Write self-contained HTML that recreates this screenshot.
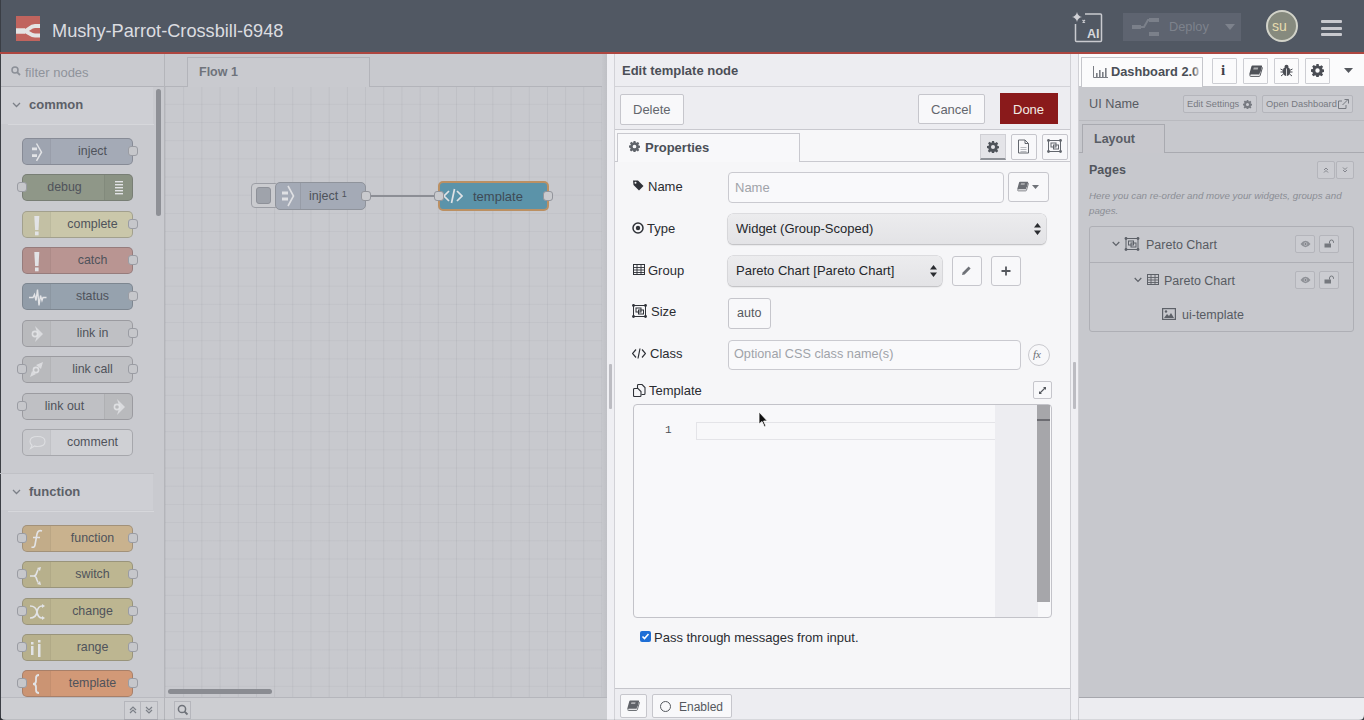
<!DOCTYPE html>
<html><head><meta charset="utf-8">
<style>
*{box-sizing:border-box;margin:0;padding:0}
html,body{width:1364px;height:720px;overflow:hidden;background:#cfd0d4;font-family:"Liberation Sans",sans-serif;position:relative}
.a{position:absolute}
#hdr{left:0;top:0;width:1364px;height:52px;background:#515863}
#redline{left:0;top:52px;width:1364px;height:2px;background:#ad4640}
#pal{left:0;top:54px;width:164px;height:666px;background:#c9cacf}
#palbr{left:164px;top:54px;width:1px;height:666px;background:#b4b5ba}
#ws{left:165px;top:54px;width:442px;height:666px;background:#d0d1d5}
#tray{left:607px;top:54px;width:471px;height:666px;background:#f6f6f8}
#sb{left:1078px;top:54px;width:286px;height:666px;background:#c9c9ce}
.txt{white-space:pre;line-height:1}
</style></head><body>

<div id="hdr" class="a"><div class="a" style="left:0;top:0;width:1px;height:52px;background:#3a3e45"></div>
 <div class="a" style="left:16px;top:16px;width:24px;height:25px;background:#c0645e"></div>
 <svg class="a" style="left:16px;top:16px" width="24" height="25" viewBox="0 0 24 25"><path d="M0 15 L8 15 C12 15 14 10 19 10 L24 10 M8 15 C12 15 14 19.5 19 19.5 L24 19.5" stroke="#e4e4e4" stroke-width="4" fill="none"/><path d="M0 15 L9 15" stroke="#e4e4e4" stroke-width="5.5"/></svg>
 <div class="a txt" style="left:52px;top:22px;font-size:18.2px;color:#dcdde0">Mushy-Parrot-Crossbill-6948</div>
 <svg class="a" style="left:1071px;top:10px" width="34" height="34" viewBox="0 0 34 34">
  <path d="M4.5 14 V30.5 Q4.5 31.5 5.5 31.5 H29.5 Q30.5 31.5 30.5 30.5 V5 Q30.5 4 29.5 4 H14" stroke="#c9cacf" stroke-width="1.5" fill="none"/>
  <path d="M6 2 Q6.8 6.2 11 7 Q6.8 7.8 6 12 Q5.2 7.8 1 7 Q5.2 6.2 6 2Z" fill="#d0d1d6"/>
  <path d="M11.5 10 L14 12.5 M14 10 L11.5 12.5" stroke="#c9cacf" stroke-width="1.1"/>
  <text x="16" y="27.5" font-family="Liberation Sans" font-weight="700" font-size="12.5" fill="#d6d7db">AI</text>
 </svg>
 <div class="a" style="left:1123px;top:13px;width:118px;height:28px;background:#5e6470"></div>
 <svg class="a" style="left:1132px;top:17px" width="28" height="20" viewBox="0 0 28 20"><rect x="0" y="8" width="9" height="4" fill="#7b808a"/><rect x="17" y="1" width="10" height="4" fill="#7b808a"/><rect x="17" y="15" width="10" height="4" fill="#7b808a"/><path d="M9 10 L12 10 L16 3 L17 3" stroke="#7b808a" stroke-width="2" fill="none"/></svg>
 <div class="a txt" style="left:1169px;top:20.5px;font-size:12.8px;color:#7d828c">Deploy</div>
 <svg class="a" style="left:1225px;top:24px" width="10" height="6"><path d="M0 0 L10 0 L5 6Z" fill="#7d828c"/></svg>
 <div class="a" style="left:1266px;top:10px;width:32px;height:32px;border-radius:50%;background:#868a7e;border:2px solid #d2d3c9"></div>
 <div class="a txt" style="left:1272px;top:19px;font-size:14px;color:#e6dcae">su</div>
 <div class="a" style="left:1321px;top:20px;width:21px;height:3px;background:#c8c9ce;border-radius:1px"></div>
 <div class="a" style="left:1321px;top:27px;width:21px;height:3px;background:#c8c9ce;border-radius:1px"></div>
 <div class="a" style="left:1321px;top:33px;width:21px;height:3px;background:#c8c9ce;border-radius:1px"></div>
</div>
<div id="redline" class="a"></div>
<style>
.pn{left:22px;width:111px;height:27px;border:1px solid rgba(60,62,70,0.28);border-radius:5px;overflow:hidden}
.pni{left:0;top:0;width:28px;height:25px;background:rgba(0,0,0,0.03);border-right:1px solid rgba(0,0,0,0.03)}
.pni.r{left:auto;right:0;border-right:none;border-left:1px solid rgba(0,0,0,0.05)}
.pni svg{position:absolute;left:0;top:0}
.pnl{top:0;height:25px;line-height:25px;text-align:center;font-size:12.4px;color:#4f535b;white-space:pre}
.pp{width:10px;height:10px;background:#c6c7cb;border:1px solid #9a9ca3;border-radius:3px}
.cat{left:0;width:164px;height:38px}
</style><div id="pal" class="a"></div><div id="palbr" class="a"></div>
<div class="a" style="left:0;top:54px;width:1px;height:666px;background:#3c3f45"></div><svg class="a" style="left:11px;top:66px" width="10" height="10" viewBox="0 0 10 10"><circle cx="4" cy="4" r="3" fill="none" stroke="#8b8f97" stroke-width="1.5"/><path d="M6.3 6.3 L9 9" stroke="#8b8f97" stroke-width="1.8"/></svg><div class="a txt" style="left:25px;top:66px;font-size:13px;color:#8f939b">filter nodes</div><div class="a" style="left:1px;top:86px;width:163px;height:1px;background:#b2b3b9"></div><div class="a" style="left:1px;top:87px;width:152px;height:37px;background:#cecfd4"></div><svg class="a" style="left:12px;top:102px" width="9" height="6" viewBox="0 0 9 6"><path d="M1 1 L4.5 4.5 L8 1" fill="none" stroke="#7c8088" stroke-width="1.3"/></svg><div class="a txt" style="left:29px;top:98px;font-size:13px;font-weight:700;color:#5c6068">common</div><div class="a" style="left:8px;top:124px;width:146px;height:1px;background:#d6d7db"></div><div class="a pn" style="top:138px;background:#a4aab6"><div class="a pni"><svg width="28" height="26" viewBox="0 0 28 26"><path d="M9 9.8 h5 M9 16.6 h5" stroke="#e2e3e6" stroke-width="2.8"/><path d="M13.5 4.5 l5 8.7 l-5 8.7" fill="none" stroke="#e2e3e6" stroke-width="1.5"/></svg></div><div class="a pnl" style="left:28px;width:83px">inject</div></div><div class="a pp" style="left:128px;top:146px"></div><div class="a pn" style="top:174px;background:#8f9788"><div class="a pni r"><svg width="28" height="26" viewBox="0 0 28 26"><g fill="#e2e3e6"><rect x="10" y="6" width="8" height="1.4"/><rect x="10" y="9" width="8" height="1.4"/><rect x="10" y="12" width="8" height="1.4"/><rect x="10" y="15" width="8" height="1.4"/><rect x="10" y="18" width="8" height="1.4"/></g></svg></div><div class="a pnl" style="left:0;width:83px">debug</div></div><div class="a pp" style="left:17px;top:182px"></div><div class="a pn" style="top:211px;background:#cac7aa"><div class="a pni"><svg width="28" height="26" viewBox="0 0 28 26"><path d="M11.3 4 h5 l-0.8 14 h-3.4z" fill="#e2e3e6"/><rect x="12" y="19.5" width="3.6" height="3.8" fill="#e2e3e6"/></svg></div><div class="a pnl" style="left:28px;width:83px">complete</div></div><div class="a pp" style="left:128px;top:219px"></div><div class="a pn" style="top:247px;background:#b99592"><div class="a pni"><svg width="28" height="26" viewBox="0 0 28 26"><path d="M11.3 4 h5 l-0.8 14 h-3.4z" fill="#e2e3e6"/><rect x="12" y="19.5" width="3.6" height="3.8" fill="#e2e3e6"/></svg></div><div class="a pnl" style="left:28px;width:83px">catch</div></div><div class="a pp" style="left:128px;top:255px"></div><div class="a pn" style="top:283px;background:#96a2ae"><div class="a pni"><svg width="28" height="26" viewBox="0 0 28 26"><path d="M6 13.5 h4 l1.5 -3 l1.5 6 l1.5 -11 l1.5 16 l1.5 -10 l1.5 5 l1 -3 h3.5" fill="none" stroke="#e2e3e6" stroke-width="1.4"/></svg></div><div class="a pnl" style="left:28px;width:83px">status</div></div><div class="a pp" style="left:128px;top:291px"></div><div class="a pn" style="top:320px;background:#bfc0c4"><div class="a pni"><svg width="28" height="26" viewBox="0 0 28 26"><path d="M12 5 l8 8 l-8 8 l2.5 -8z" fill="#e2e3e6" opacity="0.8"/><circle cx="12" cy="13" r="2.6" fill="none" stroke="#e2e3e6" stroke-width="1.6" opacity="0.9"/></svg></div><div class="a pnl" style="left:28px;width:83px">link in</div></div><div class="a pp" style="left:128px;top:328px"></div><div class="a pn" style="top:356px;background:#bfc0c4"><div class="a pni"><svg width="28" height="26" viewBox="0 0 28 26"><path d="M13 8 l7 -3 l-2 7z M7 20 l6 -3 l-4 -3z" fill="#e2e3e6" opacity="0.8"/><circle cx="13" cy="13" r="2.6" fill="none" stroke="#e2e3e6" stroke-width="1.6" opacity="0.9"/></svg></div><div class="a pnl" style="left:28px;width:83px">link call</div></div><div class="a pp" style="left:128px;top:364px"></div><div class="a pp" style="left:17px;top:364px"></div><div class="a pn" style="top:393px;background:#bfc0c4"><div class="a pni r"><svg width="28" height="26" viewBox="0 0 28 26"><path d="M12 5 l8 8 l-8 8 l2.5 -8z" fill="#e2e3e6" opacity="0.8"/><circle cx="12" cy="13" r="2.6" fill="none" stroke="#e2e3e6" stroke-width="1.6" opacity="0.9"/></svg></div><div class="a pnl" style="left:0;width:83px">link out</div></div><div class="a pp" style="left:17px;top:401px"></div><div class="a pn" style="top:429px;background:#cfd0d4"><div class="a pni"><svg width="28" height="26" viewBox="0 0 28 26"><path d="M7 11.5 q0 -5 7.5 -5 q7.5 0 7.5 5 q0 5 -7.5 5 q-2 0 -3 -0.5 l-4 2.5 l1.5 -3.2 q-2 -1.5 -2 -3.8z" fill="none" stroke="#e2e3e6" stroke-width="1.1" opacity="0.8"/></svg></div><div class="a pnl" style="left:28px;width:83px">comment</div></div><div class="a" style="left:0;top:473px;width:154px;height:1px;background:#c0c1c6"></div><div class="a" style="left:1px;top:474px;width:152px;height:36px;background:#cecfd4"></div><svg class="a" style="left:12px;top:489px" width="9" height="6" viewBox="0 0 9 6"><path d="M1 1 L4.5 4.5 L8 1" fill="none" stroke="#7c8088" stroke-width="1.3"/></svg><div class="a txt" style="left:29px;top:485px;font-size:13px;font-weight:700;color:#5c6068">function</div><div class="a" style="left:8px;top:511px;width:146px;height:1px;background:#d6d7db"></div><div class="a pn" style="top:525px;background:#c9b28e"><div class="a pni"><svg width="28" height="26" viewBox="0 0 28 26"><path d="M19 5 q-4 -1.5 -5 3 l-2 11 q-0.5 3 -3.5 2" fill="none" stroke="#e2e3e6" stroke-width="1.6"/><path d="M10 11.5 h7" stroke="#e2e3e6" stroke-width="1.4"/></svg></div><div class="a pnl" style="left:28px;width:83px">function</div></div><div class="a pp" style="left:128px;top:533px"></div><div class="a pp" style="left:17px;top:533px"></div><div class="a pn" style="top:561px;background:#bdb691"><div class="a pni"><svg width="28" height="26" viewBox="0 0 28 26"><path d="M7 14 h4 q2 0 3 -4 l1 -2.5 M11 14 q2 0 3 4 l1 2.5" fill="none" stroke="#e2e3e6" stroke-width="1.6"/><path d="M14 6 l4 -1 l-1 4z M14 22 l4 1 l-1 -4z" fill="#e2e3e6"/></svg></div><div class="a pnl" style="left:28px;width:83px">switch</div></div><div class="a pp" style="left:128px;top:569px"></div><div class="a pp" style="left:17px;top:569px"></div><div class="a pn" style="top:598px;background:#bdb691"><div class="a pni"><svg width="28" height="26" viewBox="0 0 28 26"><path d="M7 7 q6 0 7 6 q1 6 5 6 M7 19 q6 0 7 -6 q1 -6 5 -6" fill="none" stroke="#e2e3e6" stroke-width="1.6"/><path d="M19 5 l3 2 l-3 2z M19 17 l3 2 l-3 2z" fill="#e2e3e6"/></svg></div><div class="a pnl" style="left:28px;width:83px">change</div></div><div class="a pp" style="left:128px;top:606px"></div><div class="a pp" style="left:17px;top:606px"></div><div class="a pn" style="top:634px;background:#bdb691"><div class="a pni"><svg width="28" height="26" viewBox="0 0 28 26"><rect x="8" y="7" width="2.5" height="2.5" fill="#e2e3e6"/><rect x="8" y="11" width="2.5" height="9" fill="#e2e3e6"/><rect x="15" y="5" width="2.5" height="2.5" fill="#e2e3e6"/><rect x="15" y="9" width="2.5" height="13" fill="#e2e3e6"/></svg></div><div class="a pnl" style="left:28px;width:83px">range</div></div><div class="a pp" style="left:128px;top:642px"></div><div class="a pp" style="left:17px;top:642px"></div><div class="a pn" style="top:670px;background:#d29977"><div class="a pni"><svg width="28" height="26" viewBox="0 0 28 26"><path d="M16 4 q-3 0 -3 3 v3 q0 3 -3 3 q3 0 3 3 v3 q0 3 3 3" fill="none" stroke="#e2e3e6" stroke-width="1.8"/></svg></div><div class="a pnl" style="left:28px;width:83px">template</div></div><div class="a pp" style="left:128px;top:678px"></div><div class="a pp" style="left:17px;top:678px"></div><div class="a" style="left:156px;top:89px;width:5px;height:127px;background:#8e9096;border-radius:3px"></div><div class="a" style="left:1px;top:697px;width:163px;height:23px;background:#cdced2;border-top:1px solid #b9bac0"></div><div class="a" style="left:124px;top:701px;width:17px;height:19px;border:1px solid #b5b6bc;background:#cfd0d4"></div><div class="a" style="left:140px;top:701px;width:18px;height:19px;border:1px solid #b5b6bc;background:#cfd0d4"></div><svg class="a" style="left:128px;top:705px" width="10" height="10" viewBox="0 0 10 10"><path d="M2 5 L5 2 L8 5 M2 8 L5 5 L8 8" fill="none" stroke="#7c8088" stroke-width="1.2"/></svg><svg class="a" style="left:144px;top:705px" width="10" height="10" viewBox="0 0 10 10"><path d="M2 2 L5 5 L8 2 M2 5 L5 8 L8 5" fill="none" stroke="#7c8088" stroke-width="1.2"/></svg>
<style>
#ws{left:165px;top:54px;width:442px;height:666px;background:#c8c9ce}
#grid{left:165px;top:86px;width:438px;height:611px;
 background-image:linear-gradient(to right, rgba(110,112,122,0.10) 1px, transparent 1px),linear-gradient(to bottom, rgba(110,112,122,0.075) 1px, transparent 1px);
 background-size:18.2px 18.2px;background-position:0 -0.4px}
</style>
<div id="ws" class="a"></div>
<div id="grid" class="a"></div>
<div class="a" style="left:165px;top:86px;width:442px;height:1px;background:#b3b4ba"></div><div class="a" style="left:187px;top:57px;width:183px;height:30px;background:#c9cacf;border:1px solid #b3b4ba;border-bottom:none"></div><div class="a txt" style="left:199px;top:66px;font-size:12.5px;font-weight:700;color:#6f737b">Flow 1</div><div class="a" style="left:602px;top:54px;width:5px;height:643px;background:linear-gradient(to right,#c6c7cc,#bfc0c5)"></div><div class="a" style="left:251px;top:183px;width:28px;height:25px;background:#cacbcf;border:1px solid #9c9ea5;border-radius:4px"></div><div class="a" style="left:256px;top:187px;width:15px;height:17px;background:#9fa3ab;border:1px solid #8e9199;border-radius:3px"></div><div class="a" style="left:275px;top:182px;width:91px;height:28px;background:#a4aab6;border:1px solid #8f939b;border-radius:5px"></div><div class="a" style="left:300px;top:183px;width:1px;height:26px;background:rgba(0,0,0,0.08)"></div><svg class="a" style="left:280px;top:183px" width="20" height="26" viewBox="0 0 20 26"><path d="M2 10 h6 M2 16 h6" stroke="#dfe0e3" stroke-width="2.8"/><path d="M8 3 l5.5 10 l-5.5 10" fill="none" stroke="#dfe0e3" stroke-width="1.6"/></svg><div class="a txt" style="left:309px;top:190px;font-size:12.5px;color:#4e525a">inject <span style="font-size:9px;position:relative;top:-3px">1</span></div><div class="a" style="left:368px;top:195px;width:70px;height:2px;background:#8c8e95"></div><div class="a" style="left:361px;top:191px;width:10px;height:10px;background:#c9cace;border:1px solid #93959c;border-radius:3px"></div><div class="a" style="left:438px;top:181px;width:111px;height:30px;background:#5b93a9;border:2px solid #bb9063;border-radius:5px"></div><svg class="a" style="left:443px;top:186px" width="20" height="20" viewBox="0 0 20 20"><path d="M6 5 l-5 5 l5 5 M14 5 l5 5 l-5 5 M11.5 3 l-3 14" fill="none" stroke="#e0e2e6" stroke-width="1.7"/></svg><div class="a txt" style="left:473px;top:190px;font-size:13px;color:#3f4a55">template</div><div class="a" style="left:434px;top:191px;width:10px;height:10px;background:#c9cace;border:1px solid #93959c;border-radius:3px"></div><div class="a" style="left:543px;top:191px;width:10px;height:10px;background:#c9cace;border:1px solid #93959c;border-radius:3px"></div><div class="a" style="left:168px;top:689px;width:104px;height:5px;background:#8a8c92;border-radius:3px"></div><div class="a" style="left:165px;top:697px;width:442px;height:23px;background:#cdced2;border-top:1px solid #b5b6bc"></div><div class="a" style="left:174px;top:701px;width:17px;height:18px;border:1px solid #b5b6bc;background:#cfd0d4"></div><svg class="a" style="left:177px;top:704px" width="12" height="12" viewBox="0 0 12 12"><circle cx="5" cy="5" r="3.6" fill="none" stroke="#6e7279" stroke-width="1.5"/><path d="M7.6 7.6 L10.5 10.5" stroke="#6e7279" stroke-width="1.8"/></svg>
<style>
.tb{position:absolute;background:#f8f8fa;border:1px solid #c6c6cc;border-radius:2px}
.lbl{position:absolute;font-size:13px;color:#2a2c31;white-space:pre;line-height:1}
.inp{position:absolute;background:#f9f9fb;border:1px solid #cacad0;border-radius:4px}
.sel{position:absolute;border-radius:5px;background:linear-gradient(#ececee,#e3e3e6);box-shadow:0 0 0 0.5px #c4c4c8, 0 1px 1.5px rgba(0,0,0,0.25)}
</style>
<div class="a" style="left:607px;top:54px;width:471px;height:666px;background:#f6f6f8"></div><div class="a" style="left:607px;top:54px;width:7px;height:666px;background:#efeff3"></div><div class="a" style="left:614px;top:54px;width:1px;height:666px;background:#d2d2d7"></div><div class="a" style="left:609px;top:364px;width:3px;height:45px;background:#bcbcc2;border-radius:1px"></div><div class="a" style="left:615px;top:54px;width:455px;height:76px;background:#ededf1"></div><div class="a" style="left:615px;top:86px;width:455px;height:1px;background:#d3d3d8"></div><div class="a txt" style="left:622px;top:64px;font-size:13px;font-weight:700;color:#4b4f57">Edit template node</div><div class="a" style="left:615px;top:129px;width:455px;height:1px;background:#c9c9cf"></div><div class="tb" style="left:620px;top:94px;width:64px;height:31px"></div><div class="a txt" style="left:633px;top:103px;font-size:13px;color:#63666d">Delete</div><div class="tb" style="left:918px;top:94px;width:67px;height:30px"></div><div class="a txt" style="left:931px;top:103px;font-size:13px;color:#63666d">Cancel</div><div class="a" style="left:1000px;top:93px;width:58px;height:31px;background:#8a1a1b"></div><div class="a txt" style="left:1013px;top:103px;font-size:13px;color:#f2ece4">Done</div><div class="a" style="left:615px;top:130px;width:455px;height:31px;background:#f7f7f9"></div><div class="a" style="left:615px;top:161px;width:455px;height:1px;background:#c9c9cf"></div><div class="a" style="left:617px;top:133px;width:183px;height:29px;background:#f8f8fa;border:1px solid #c9c9cf;border-bottom:none"></div><svg class="a" style="left:629px;top:141px" width="11" height="11" viewBox="0 0 16 16"><path fill="#5f636a" d="M6.6 0h2.8l.4 2.2 1.2.5 1.9-1.3 2 2-1.3 1.9.5 1.2 2.2.4v2.8l-2.2.4-.5 1.2 1.3 1.9-2 2-1.9-1.3-1.2.5-.4 2.2H6.6l-.4-2.2-1.2-.5-1.9 1.3-2-2 1.3-1.9-.5-1.2L0 9.4V6.6l2.2-.4.5-1.2-1.3-1.9 2-2 1.9 1.3 1.2-.5zM8 5.3A2.7 2.7 0 1 0 8 10.7 2.7 2.7 0 1 0 8 5.3z"/></svg><div class="a txt" style="left:645px;top:141px;font-size:13px;font-weight:700;color:#4b4f57">Properties</div><div class="a" style="left:980px;top:134px;width:26px;height:26px;background:#e4e4e8;border:1px solid #cfcfd4;border-bottom:2px solid #8f9298"></div><svg class="a" style="left:987px;top:141px" width="12" height="12" viewBox="0 0 16 16"><path fill="#4f535a" d="M6.6 0h2.8l.4 2.2 1.2.5 1.9-1.3 2 2-1.3 1.9.5 1.2 2.2.4v2.8l-2.2.4-.5 1.2 1.3 1.9-2 2-1.9-1.3-1.2.5-.4 2.2H6.6l-.4-2.2-1.2-.5-1.9 1.3-2-2 1.3-1.9-.5-1.2L0 9.4V6.6l2.2-.4.5-1.2-1.3-1.9 2-2 1.9 1.3 1.2-.5zM8 5.3A2.7 2.7 0 1 0 8 10.7 2.7 2.7 0 1 0 8 5.3z"/></svg><div class="tb" style="left:1011px;top:134px;width:26px;height:26px"></div><svg class="a" style="left:1017px;top:139px" width="13" height="15" viewBox="0 0 13 15"><path d="M1.5 1 h6.5 l3.5 3.5 v9.5 h-10 z M8 1 v3.5 h3.5" fill="none" stroke="#62666d" stroke-width="1"/><path d="M3.5 8.5 h6 M3.5 10.5 h6 M3.5 12.5 h6" stroke="#8f9298" stroke-width="0.6"/></svg><div class="tb" style="left:1042px;top:134px;width:26px;height:26px"></div><svg class="a" style="left:1047px;top:139px" width="15" height="14" viewBox="0 0 15 14"><rect x="1.5" y="1.5" width="12" height="11" fill="none" stroke="#62666d" stroke-width="1"/><g fill="#62666d"><circle cx="1.5" cy="1.5" r="1.4"/><circle cx="13.5" cy="1.5" r="1.4"/><circle cx="1.5" cy="12.5" r="1.4"/><circle cx="13.5" cy="12.5" r="1.4"/></g><rect x="4" y="4" width="5" height="4" fill="none" stroke="#62666d" stroke-width="1"/><rect x="6.5" y="6" width="5" height="4" fill="none" stroke="#62666d" stroke-width="1"/></svg><svg class="a" style="left:633px;top:180px" width="11" height="11" viewBox="0 0 11 11"><path d="M0 0.5 h5 l5.5 5.5 l-4.5 4.5 l-5.5 -5.5 z" fill="#2f3238"/><circle cx="2.5" cy="2.7" r="1" fill="#f6f6f8"/></svg><div class="lbl" style="left:648px;top:180px">Name</div><div class="inp" style="left:728px;top:172px;width:276px;height:31px"></div><div class="a txt" style="left:735px;top:181px;font-size:13px;color:#a0a3a9">Name</div><div class="tb" style="left:1008px;top:172px;width:41px;height:30px;border-radius:3px"></div><svg class="a" style="left:1017px;top:181px" width="12" height="10.5" viewBox="0 0 13 11"><path d="M3.2 0.5 h8.3 q0.8 0 0.6 0.8 l-2 7.2 q-0.2 0.7 -1 0.7 h-8.2 q-0.8 0 -0.6 -0.8 l2 -7.2 q0.2 -0.7 0.9 -0.7z" fill="#6a6d73"/><path d="M1.5 9.2 h7.6 q0.8 0 1 -0.6 l0.6 -2" fill="none" stroke="#f0f0f2" stroke-width="0.9"/><path d="M0.9 9.4 q-0.4 1.1 0.6 1.1 h7.8 q0.8 0 1 -0.7 l2.2 -7.6" fill="none" stroke="#6a6d73" stroke-width="0.9"/><rect x="5" y="2.2" width="4.2" height="1.8" fill="#f0f0f2" opacity="0.55" transform="skewX(-15)"/></svg><svg class="a" style="left:1032px;top:185px" width="7" height="4"><path d="M0 0 h7 l-3.5 4z" fill="#6f7278"/></svg><svg class="a" style="left:632px;top:222px" width="12" height="12" viewBox="0 0 12 12"><circle cx="6" cy="6" r="5" fill="none" stroke="#2f3238" stroke-width="1.5"/><circle cx="6" cy="6" r="2.2" fill="#2f3238"/></svg><div class="lbl" style="left:647px;top:222px">Type</div><div class="sel" style="left:728px;top:214px;width:318px;height:30px"></div><div class="a txt" style="left:736px;top:222px;font-size:13px;color:#25272b">Widget (Group-Scoped)</div><svg class="a" style="left:1034px;top:223px" width="7" height="12" viewBox="0 0 7 12"><path d="M3.5 0 l3.5 4.5 h-7z M3.5 12 l3.5 -4.5 h-7z" fill="#2a2c30"/></svg><svg class="a" style="left:633px;top:264px" width="12" height="11" viewBox="0 0 12 11"><rect x="0.5" y="0.5" width="11" height="10" fill="none" stroke="#2f3238" stroke-width="1"/><path d="M0.5 3.5 h11 M0.5 6 h11 M0.5 8.5 h11 M4 0.5 v10 M8 0.5 v10" stroke="#2f3238" stroke-width="0.9"/></svg><div class="lbl" style="left:648px;top:264px">Group</div><div class="sel" style="left:728px;top:256px;width:214px;height:30px"></div><div class="a txt" style="left:736px;top:264px;font-size:13px;color:#25272b">Pareto Chart [Pareto Chart]</div><svg class="a" style="left:930px;top:265px" width="7" height="12" viewBox="0 0 7 12"><path d="M3.5 0 l3.5 4.5 h-7z M3.5 12 l3.5 -4.5 h-7z" fill="#2a2c30"/></svg><div class="tb" style="left:952px;top:256px;width:30px;height:30px;border-radius:3px"></div><svg class="a" style="left:961px;top:265px" width="11" height="11" viewBox="0 0 11 11"><path d="M1 10 l0.6 -2.6 l6 -6 l2 2 l-6 6z" fill="#6f7278"/></svg><div class="tb" style="left:991px;top:256px;width:30px;height:30px;border-radius:3px"></div><svg class="a" style="left:1001px;top:266px" width="10" height="10" viewBox="0 0 10 10"><path d="M5 0.5 v9 M0.5 5 h9" stroke="#55585e" stroke-width="1.8"/></svg><svg class="a" style="left:632px;top:304px" width="15" height="14" viewBox="0 0 15 14"><rect x="1.5" y="1.5" width="12" height="11" fill="none" stroke="#2f3238" stroke-width="1"/><g fill="#2f3238"><circle cx="1.5" cy="1.5" r="1.4"/><circle cx="13.5" cy="1.5" r="1.4"/><circle cx="1.5" cy="12.5" r="1.4"/><circle cx="13.5" cy="12.5" r="1.4"/></g><rect x="4" y="4" width="5" height="4" fill="none" stroke="#2f3238" stroke-width="1"/><rect x="6.5" y="6" width="5" height="4" fill="none" stroke="#2f3238" stroke-width="1"/></svg><div class="lbl" style="left:651px;top:305px">Size</div><div class="tb" style="left:728px;top:298px;width:43px;height:31px;border-radius:3px"></div><div class="a txt" style="left:737px;top:307px;font-size:12.5px;color:#55585e">auto</div><svg class="a" style="left:632px;top:348px" width="14" height="11" viewBox="0 0 14 11"><path d="M4 1.5 l-3.5 4 l3.5 4 M10 1.5 l3.5 4 l-3.5 4 M8 0.5 l-2 10" fill="none" stroke="#2f3238" stroke-width="1.2"/></svg><div class="lbl" style="left:650px;top:347px">Class</div><div class="inp" style="left:728px;top:340px;width:293px;height:30px"></div><div class="a txt" style="left:734px;top:348px;font-size:12.7px;color:#a0a3a9">Optional CSS class name(s)</div><div class="a" style="left:1028px;top:344px;width:22px;height:22px;border-radius:50%;border:1px solid #c9c9ce;background:#f8f8fa"></div><div class="a txt" style="left:1033px;top:349px;font-size:11px;font-style:italic;font-family:'Liberation Serif';color:#6a6d73">fx</div><svg class="a" style="left:633px;top:384px" width="13" height="13" viewBox="0 0 13 13"><path d="M4.5 4 v-2.5 q0 -1 1 -1 h3.5 l3 3 v6 q0 1 -1 1 h-2.5" fill="none" stroke="#2f3238" stroke-width="1.1"/><path d="M1.5 4.5 h3.5 l3 3 v4 q0 1 -1 1 h-5.5 q-1 0 -1 -1 v-6 q0 -1 1 -1z" fill="none" stroke="#2f3238" stroke-width="1.1"/></svg><div class="lbl" style="left:649px;top:384px">Template</div><div class="tb" style="left:1033px;top:381px;width:19px;height:18px;border-radius:2px"></div><svg class="a" style="left:1038px;top:386px" width="9" height="9" viewBox="0 0 9 9"><path d="M2 7 l5 -5" stroke="#55585e" stroke-width="1.1"/><path d="M5 1 h3 v3z M1 5 v3 h3z" fill="#55585e"/></svg><div class="a" style="left:633px;top:404px;width:419px;height:214px;background:#f8f8fa;border:1px solid #c3c3c9;border-radius:4px;overflow:hidden"></div><div class="a" style="left:995px;top:405px;width:43px;height:212px;background:#ededf1"></div><div class="a" style="left:1037px;top:405px;width:13px;height:197px;background:#a6a6aa"></div><div class="a" style="left:1037px;top:419px;width:13px;height:2px;background:#6c6c72"></div><div class="a" style="left:696px;top:422px;width:299px;height:18px;border:1px solid #e4e4e8;border-right:none;background:#f8f8fa"></div><div class="a txt" style="left:665px;top:425px;font-size:11px;font-family:'Liberation Mono';color:#4c4f55">1</div><svg class="a" style="left:758px;top:411px" width="10" height="17" viewBox="0 0 10 17"><path d="M1 1 L1 13 L4 10.5 L6.5 16 L8 15.3 L5.6 10 L9.3 10 Z" fill="#111" stroke="#fff" stroke-width="0.8"/></svg><div class="a" style="left:640px;top:631px;width:11px;height:11px;background:#1f6fd6;border-radius:2px"></div><svg class="a" style="left:641px;top:632px" width="9" height="9" viewBox="0 0 9 9"><path d="M1.5 4.5 l2 2 l4 -4.5" fill="none" stroke="#fff" stroke-width="1.6"/></svg><div class="lbl" style="left:654px;top:631px">Pass through messages from input.</div><div class="a" style="left:615px;top:688px;width:455px;height:32px;background:#ededf1;border-top:1px solid #c5c5cb"></div><div class="tb" style="left:620px;top:694px;width:27px;height:24px"></div><svg class="a" style="left:627px;top:700px" width="13" height="11" viewBox="0 0 13 11"><path d="M3.2 0.5 h8.3 q0.8 0 0.6 0.8 l-2 7.2 q-0.2 0.7 -1 0.7 h-8.2 q-0.8 0 -0.6 -0.8 l2 -7.2 q0.2 -0.7 0.9 -0.7z" fill="#5f6268"/><path d="M1.5 9.2 h7.6 q0.8 0 1 -0.6 l0.6 -2" fill="none" stroke="#f0f0f2" stroke-width="0.9"/><path d="M0.9 9.4 q-0.4 1.1 0.6 1.1 h7.8 q0.8 0 1 -0.7 l2.2 -7.6" fill="none" stroke="#5f6268" stroke-width="0.9"/><rect x="5" y="2.2" width="4.2" height="1.8" fill="#f0f0f2" opacity="0.55" transform="skewX(-15)"/></svg><div class="tb" style="left:652px;top:694px;width:80px;height:24px"></div><div class="a" style="left:660px;top:701px;width:11px;height:11px;border-radius:50%;border:1.3px solid #55585e"></div><div class="a txt" style="left:679px;top:701px;font-size:12px;color:#55585e">Enabled</div><div class="a" style="left:1070px;top:54px;width:1px;height:666px;background:#d0d0d5"></div><div class="a" style="left:1071px;top:54px;width:7px;height:666px;background:#efeff3"></div><div class="a" style="left:1073px;top:362px;width:3px;height:47px;background:#bcbcc2;border-radius:1px"></div><div class="a" style="left:1078px;top:54px;width:1px;height:666px;background:#d0d0d5"></div>
<style>
.sbb{position:absolute;background:#fbfbfc;border:1px solid #cdced3;border-radius:1px}
.dbtn{position:absolute;border:1px solid #b4b5bb;border-radius:2px;background:#cbccd1}
</style>
<div class="a" style="left:1079px;top:54px;width:285px;height:666px;background:#c7c8cd"></div><div class="a" style="left:1079px;top:54px;width:285px;height:32px;background:#fbfbfc"></div><div class="a" style="left:1079px;top:86px;width:285px;height:1px;background:#c5c6cb"></div><div class="a" style="left:1081px;top:57px;width:122px;height:30px;background:#fbfbfc;border:1px solid #c5c6cb;border-bottom:none;overflow:hidden"><svg class="a" style="left:11px;top:8px" width="15" height="12" viewBox="0 0 15 12"><path d="M0.5 0 v11.5 h14.5" fill="none" stroke="#7a7d84" stroke-width="1"/><g fill="#7a7d84"><rect x="3" y="7" width="1.6" height="4"/><rect x="6" y="4" width="1.6" height="7"/><rect x="9" y="6" width="1.6" height="5"/><rect x="12" y="2" width="1.6" height="9"/></g></svg><div class="a txt" style="left:29px;top:8px;font-size:12.8px;font-weight:700;color:#4a4e56">Dashboard 2.0</div><div class="a" style="left:110px;top:0;width:10px;height:30px;background:linear-gradient(to right, rgba(251,251,252,0), #fbfbfc)"></div></div><div class="sbb" style="left:1212px;top:58px;width:25px;height:26px"></div><div class="sbb" style="left:1243px;top:58px;width:25px;height:26px"></div><div class="sbb" style="left:1274px;top:58px;width:25px;height:26px"></div><div class="sbb" style="left:1305px;top:58px;width:25px;height:26px"></div><div class="a txt" style="left:1221px;top:63px;font-size:15px;font-weight:700;font-family:'Liberation Serif';color:#3f4249">i</div><svg class="a" style="left:1249px;top:65px" width="14" height="12" viewBox="0 0 13 11"><path d="M3.2 0.5 h8.3 q0.8 0 0.6 0.8 l-2 7.2 q-0.2 0.7 -1 0.7 h-8.2 q-0.8 0 -0.6 -0.8 l2 -7.2 q0.2 -0.7 0.9 -0.7z" fill="#4f5258"/><path d="M1.5 9.2 h7.6 q0.8 0 1 -0.6 l0.6 -2" fill="none" stroke="#fbfbfc" stroke-width="0.9"/><path d="M0.9 9.4 q-0.4 1.1 0.6 1.1 h7.8 q0.8 0 1 -0.7 l2.2 -7.6" fill="none" stroke="#4f5258" stroke-width="0.9"/><rect x="5" y="2.2" width="4.2" height="1.8" fill="#fbfbfc" opacity="0.55" transform="skewX(-15)"/></svg><svg class="a" style="left:1280px;top:64px" width="13" height="13" viewBox="0 0 13 13"><ellipse cx="6.5" cy="7.5" rx="3.8" ry="4.5" fill="#4a4d54"/><circle cx="6.5" cy="2.8" r="2" fill="#4a4d54"/><path d="M0.5 5 l3 1.5 M12.5 5 l-3 1.5 M0.5 8 h3 M12.5 8 h-3 M1 12 l2.5 -2 M12 12 l-2.5 -2 M6.5 4 v8" stroke="#4a4d54" stroke-width="1"/><path d="M6.5 4.5 v7.5" stroke="#fbfbfc" stroke-width="0.8"/></svg><svg class="a" style="left:1311px;top:64px" width="13" height="13" viewBox="0 0 16 16"><g fill="#4a4d54"><path d="M6.6 0h2.8l.4 2.2 1.2.5 1.9-1.3 2 2-1.3 1.9.5 1.2 2.2.4v2.8l-2.2.4-.5 1.2 1.3 1.9-2 2-1.9-1.3-1.2.5-.4 2.2H6.6l-.4-2.2-1.2-.5-1.9 1.3-2-2 1.3-1.9-.5-1.2L0 9.4V6.6l2.2-.4.5-1.2-1.3-1.9 2-2 1.9 1.3 1.2-.5zM8 5.3A2.7 2.7 0 1 0 8 10.7 2.7 2.7 0 1 0 8 5.3z"/></g></svg><svg class="a" style="left:1344px;top:68px" width="9" height="5"><path d="M0 0 h9 l-4.5 5z" fill="#55585e"/></svg><div class="a txt" style="left:1089px;top:98px;font-size:12.7px;color:#575b62">UI Name</div><div class="dbtn" style="left:1183px;top:95px;width:74px;height:18px"></div><div class="a txt" style="left:1187px;top:100px;font-size:9.3px;color:#777a81">Edit Settings</div><svg class="a" style="left:1243px;top:100px" width="9" height="9" viewBox="0 0 16 16"><g fill="#777a81"><path d="M6.6 0h2.8l.4 2.2 1.2.5 1.9-1.3 2 2-1.3 1.9.5 1.2 2.2.4v2.8l-2.2.4-.5 1.2 1.3 1.9-2 2-1.9-1.3-1.2.5-.4 2.2H6.6l-.4-2.2-1.2-.5-1.9 1.3-2-2 1.3-1.9-.5-1.2L0 9.4V6.6l2.2-.4.5-1.2-1.3-1.9 2-2 1.9 1.3 1.2-.5zM8 5.3A2.7 2.7 0 1 0 8 10.7 2.7 2.7 0 1 0 8 5.3z"/></g></svg><div class="dbtn" style="left:1262px;top:95px;width:91px;height:18px"></div><div class="a txt" style="left:1266px;top:100px;font-size:9.3px;color:#777a81">Open Dashboard</div><svg class="a" style="left:1338px;top:99px" width="11" height="10" viewBox="0 0 11 10"><path d="M8 6 v3.5 h-7.5 v-7.5 h3.5" fill="none" stroke="#777a81" stroke-width="1"/><path d="M4.5 6 l5.5 -5.5 M6.5 0.5 h4 v4" fill="none" stroke="#777a81" stroke-width="1"/></svg><div class="a" style="left:1079px;top:120px;width:285px;height:1px;background:#b9babf"></div><div class="a" style="left:1079px;top:152px;width:285px;height:1px;background:#a9aab0"></div><div class="a" style="left:1082px;top:124px;width:83px;height:29px;background:#c8c8cd;border:1px solid #a9aab0;border-bottom:none"></div><div class="a txt" style="left:1094px;top:133px;font-size:12.5px;font-weight:700;color:#595d65">Layout</div><div class="a txt" style="left:1089px;top:164px;font-size:12.5px;font-weight:700;color:#52565d">Pages</div><div class="dbtn" style="left:1317px;top:161px;width:18px;height:18px"></div><div class="dbtn" style="left:1336px;top:161px;width:18px;height:18px"></div><svg class="a" style="left:1323px;top:167px" width="6" height="6" viewBox="0 0 6 6"><path d="M1 3 l2 -2 l2 2 M1 5.5 l2 -2 l2 2" fill="none" stroke="#7a7d84" stroke-width="0.9"/></svg><svg class="a" style="left:1342px;top:167px" width="6" height="6" viewBox="0 0 6 6"><path d="M1 0.5 l2 2 l2 -2 M1 3 l2 2 l2 -2" fill="none" stroke="#7a7d84" stroke-width="0.9"/></svg><div class="a" style="left:1089px;top:188px;width:265px;font-size:9.75px;font-style:italic;color:#8b8e95;line-height:15px">Here you can re-order and move your widgets, groups and pages.</div><div class="a" style="left:1089px;top:226px;width:265px;height:106px;border:1px solid #aeafb5;border-radius:3px"></div><div class="a" style="left:1090px;top:262px;width:263px;height:1px;background:#aeafb5"></div><svg class="a" style="left:1112px;top:241px" width="8" height="6" viewBox="0 0 8 6"><path d="M0.7 1 l3.3 3.3 l3.3 -3.3" fill="none" stroke="#5d6168" stroke-width="1.2"/></svg><svg class="a" style="left:1124px;top:237px" width="16" height="14" viewBox="0 0 15 14"><rect x="1.5" y="1.5" width="12" height="11" fill="none" stroke="#5d6168" stroke-width="1"/><g fill="#5d6168"><circle cx="1.5" cy="1.5" r="1.4"/><circle cx="13.5" cy="1.5" r="1.4"/><circle cx="1.5" cy="12.5" r="1.4"/><circle cx="13.5" cy="12.5" r="1.4"/></g><rect x="4" y="4" width="5" height="4" fill="none" stroke="#5d6168" stroke-width="1"/><rect x="6.5" y="6" width="5" height="4" fill="none" stroke="#5d6168" stroke-width="1"/></svg><div class="a txt" style="left:1146px;top:239px;font-size:12.5px;color:#575b62">Pareto Chart</div><svg class="a" style="left:1134px;top:277px" width="8" height="6" viewBox="0 0 8 6"><path d="M0.7 1 l3.3 3.3 l3.3 -3.3" fill="none" stroke="#5d6168" stroke-width="1.2"/></svg><svg class="a" style="left:1147px;top:274px" width="12" height="11" viewBox="0 0 12 11"><rect x="0.5" y="0.5" width="11" height="10" fill="none" stroke="#5d6168" stroke-width="1"/><path d="M0.5 3.5 h11 M0.5 6 h11 M0.5 8.5 h11 M4 0.5 v10 M8 0.5 v10" stroke="#5d6168" stroke-width="0.9"/></svg><div class="a txt" style="left:1164px;top:275px;font-size:12.5px;color:#575b62">Pareto Chart</div><div class="dbtn" style="left:1295px;top:235px;width:20px;height:18px"></div><div class="dbtn" style="left:1319px;top:235px;width:20px;height:18px"></div><svg class="a" style="left:1300px;top:240px" width="11" height="8" viewBox="0 0 11 8"><path d="M0.5 4 q5 -6.5 10 0 q-5 6.5 -10 0z" fill="#8e9197"/><circle cx="5.5" cy="4" r="1.8" fill="#c0c1c6"/><circle cx="5.5" cy="4" r="1" fill="#7d8086"/></svg><svg class="a" style="left:1324px;top:239px" width="10" height="9" viewBox="0 0 10 9"><rect x="0.5" y="4.5" width="6.5" height="4" fill="#75787e"/><path d="M5.5 4.5 v-1.5 q0 -2 2 -2 q2 0 2 2 v0.8" fill="none" stroke="#75787e" stroke-width="1"/></svg><div class="dbtn" style="left:1295px;top:271px;width:20px;height:18px"></div><div class="dbtn" style="left:1319px;top:271px;width:20px;height:18px"></div><svg class="a" style="left:1300px;top:276px" width="11" height="8" viewBox="0 0 11 8"><path d="M0.5 4 q5 -6.5 10 0 q-5 6.5 -10 0z" fill="#8e9197"/><circle cx="5.5" cy="4" r="1.8" fill="#c0c1c6"/><circle cx="5.5" cy="4" r="1" fill="#7d8086"/></svg><svg class="a" style="left:1324px;top:275px" width="10" height="9" viewBox="0 0 10 9"><rect x="0.5" y="4.5" width="6.5" height="4" fill="#75787e"/><path d="M5.5 4.5 v-1.5 q0 -2 2 -2 q2 0 2 2 v0.8" fill="none" stroke="#75787e" stroke-width="1"/></svg><svg class="a" style="left:1162px;top:308px" width="14" height="12" viewBox="0 0 14 12"><rect x="0.6" y="0.6" width="12.8" height="10.8" fill="none" stroke="#5d6168" stroke-width="1.2"/><path d="M2 10 l3 -4 l2 2 l2 -3 l3 5z" fill="#5d6168"/><circle cx="4" cy="3.5" r="1.2" fill="#5d6168"/></svg><div class="a txt" style="left:1182px;top:309px;font-size:12.5px;color:#575b62">ui-template</div><div class="a" style="left:1079px;top:697px;width:285px;height:23px;background:#ececf0;border-top:1px solid #a6a7ad"></div>
<div class="a" style="left:0;top:719px;width:1364px;height:1px;background:rgba(60,62,70,0.12)"></div>
<svg class="a" style="left:0;top:714px" width="6" height="6" viewBox="0 0 6 6"><path d="M0 0 Q0 6 6 6 H0Z" fill="#2e3136"/></svg>
<svg class="a" style="left:1359px;top:715px" width="5" height="5" viewBox="0 0 5 5"><path d="M5 0 Q5 5 0 5 H5Z" fill="#3a3d43"/></svg>
</body></html>
